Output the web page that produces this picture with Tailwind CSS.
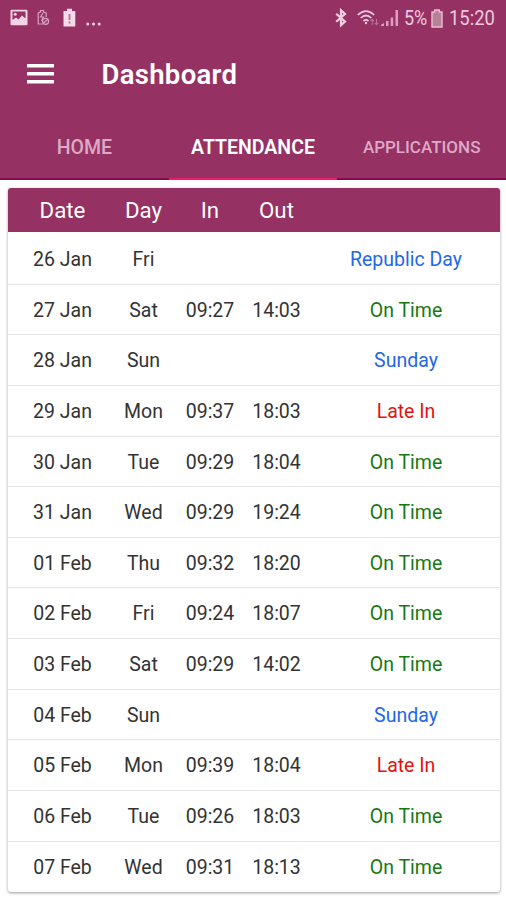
<!DOCTYPE html>
<html lang="en">
<head>
<meta charset="utf-8">
<title>Dashboard</title>
<script src="https://cdn.jsdelivr.net/npm/@tailwindcss/browser@4"></script>
</head>
<body class="w-[506px] h-[900px] overflow-hidden bg-white font-[Roboto,sans-serif]">
<header class="h-[180px] bg-[#953163] text-white flex flex-col">
  <div class="h-[36px] shrink-0 flex items-center justify-between pl-[10px] pr-[11px] text-[#efc9de]">
    <div class="flex items-center">
      <svg class="w-[18px] h-[17px] mt-[-2px]" viewBox="0 0 18 17"><rect x=".5" y=".8" width="17" height="15.4" rx="1" fill="#f3d3e4"/><path d="M2.5 2.5H15.5V9.5L12 6.5L8.5 10.5L6 8.5L2.5 11Z" fill="#953163"/><circle cx="5.2" cy="5.2" r="1.5" fill="#f3d3e4"/></svg>
      <svg class="w-[13px] h-[17px] ml-[9px] mt-[-2px]" viewBox="0 0 13 17" fill="none" stroke="#d9a0bf" stroke-width="1.2"><path d="M6 15H1.2V4L3.5 3V1.5H6.5V3L9.2 4V8"/><path d="M6 4L3.5 8H6.5L4.5 12"/><circle cx="8.6" cy="12.3" r="3"/><path d="M6.5 14.3L10.8 10.3"/></svg>
      <svg class="w-[13px] h-[19px] ml-[13px] mt-[-1px]" viewBox="0 0 13 19"><path d="M1 3H4V.7H9V3H12.3V18.5H.5V3Z" fill="#f7dbea"/><path d="M6.5 6V12M6.5 13.5V15.5" stroke="#a87590" stroke-width="1.8"/></svg>
      <svg class="w-[15px] h-[4px] ml-[10px] mt-[12px]" viewBox="0 0 15 4" fill="#f5d6e6"><circle cx="1.8" cy="2" r="1.5"/><circle cx="7.5" cy="2" r="1.5"/><circle cx="13.2" cy="2" r="1.5"/></svg>
    </div>
    <div class="flex items-center">
      <svg class="w-[12px] h-[20px] mt-[-1px]" viewBox="0 0 12 20" fill="none" stroke="#f3cfe2" stroke-width="2.2"><path d="M1.2 5.8L10 13.6L6 17.3V2.3L10 6L1.2 13.8"/></svg>
      <svg class="w-[24px] h-[18px] ml-[10px] mr-[-1px]" viewBox="0 0 24 18" fill="none" stroke="#efc9de" stroke-width="1.7"><path d="M.8 6Q9 -1.8 17.2 6M3.7 9Q9 4 14.3 9M6.5 12Q9 9.7 11.5 12"/><circle cx="9" cy="14" r="1.2" fill="#efc9de" stroke="none"/><path d="M15.2 16V10.5M13.5 12L15.2 10.3L16.9 12M19.5 10V15.5M17.8 14L19.5 15.7L21.2 14" stroke="#b87096" stroke-width="1.1"/></svg>
      <svg class="w-[18px] h-[18px] ml-[1px]" viewBox="0 0 18 18" fill="#d9a0bf"><path d="M0 17V15.8L3 14V17ZM5 12H7.5V17H5ZM9.7 8.5H12.2V17H9.7ZM14.5 1H17V17H14.5Z"/></svg>
      <span class="ml-[5px] w-[23px] text-[20px] leading-[20px] whitespace-nowrap"><span class="inline-block origin-left scale-x-[.9]">5%</span></span>
      <svg class="w-[12px] h-[19px] ml-[4px]" viewBox="0 0 12 19"><path d="M1 3H3.7V1H8.3V3H11V18H1Z" fill="#b98198" stroke="#e9bfd5" stroke-width="1.4"/></svg>
      <span class="ml-[6px] w-[46px] text-[20px] leading-[20px] whitespace-nowrap"><span class="inline-block origin-left scale-x-[.92]">15:20</span></span>
    </div>
  </div>
  <div class="h-[78px] shrink-0 flex items-center pl-[26.5px]">
    <svg class="w-[27px] h-[20px] mt-[-3px]" viewBox="0 0 27 20" fill="#fff"><path d="M0 0H27V3.6H0ZM0 8H27V11.6H0ZM0 16H27V19.6H0Z"/></svg>
    <h1 class="ml-[48px] text-[27.5px] leading-[32px] tracking-[.3px] font-semibold">Dashboard</h1>
  </div>
  <nav class="flex-1 grid grid-cols-3 text-center font-medium text-[#dda9c6] text-[19.5px]">
    <div class="pt-[4px] border-b-2 border-[#84094f] flex items-center justify-center">HOME</div>
    <div class="pt-[4px] border-b-2 border-[#f01c6b] flex items-center justify-center text-white font-semibold">ATTENDANCE</div>
    <div class="pt-[3px] border-b-2 border-[#84094f] flex items-center justify-center text-[17px]">APPLICATIONS</div>
  </nav>
</header>
<main class="pt-[7.5px] pl-[7.5px]">
  <section class="w-[492px] rounded-[3px] bg-white shadow-[0_1px_3px_rgba(0,0,0,.4)] overflow-hidden">
    <div class="h-[44.5px] pt-[2px] bg-[#953163] text-white text-[22.3px] grid grid-cols-[110px_52px_81px_52px_1fr] items-center text-center whitespace-nowrap"><span>Date</span><span class="justify-self-center">Day</span><span>In</span><span>Out</span></div>
    <div id="rows" class="pt-[2px] divide-y divide-[#e6e6e6] text-[19.5px] text-[#333333]"></div>
  </section>
</main>
<script>
const colors = {"On Time": "text-[#16790f]", "Late In": "text-[#e31212]", "Sunday": "text-[#2368e8]", "Republic Day": "text-[#2368e8]"};
const data = [
  ["26 Jan","Fri","","","Republic Day"],["27 Jan","Sat","09:27","14:03","On Time"],["28 Jan","Sun","","","Sunday"],
  ["29 Jan","Mon","09:37","18:03","Late In"],["30 Jan","Tue","09:29","18:04","On Time"],["31 Jan","Wed","09:29","19:24","On Time"],
  ["01 Feb","Thu","09:32","18:20","On Time"],["02 Feb","Fri","09:24","18:07","On Time"],["03 Feb","Sat","09:29","14:02","On Time"],
  ["04 Feb","Sun","","","Sunday"],["05 Feb","Mon","09:39","18:04","Late In"],["06 Feb","Tue","09:26","18:03","On Time"],["07 Feb","Wed","09:31","18:13","On Time"]
];
document.getElementById("rows").innerHTML = data.map(r =>
  `<div class="h-[50.65px] pt-[1.5px] grid grid-cols-[110px_52px_81px_52px_1fr] items-center text-center whitespace-nowrap">${r.slice(0,4).map(t => `<span>${t}</span>`).join("")}<span class="pl-[10px] ${colors[r[4]]}">${r[4]}</span></div>`).join("");
</script>
</body>
</html>
